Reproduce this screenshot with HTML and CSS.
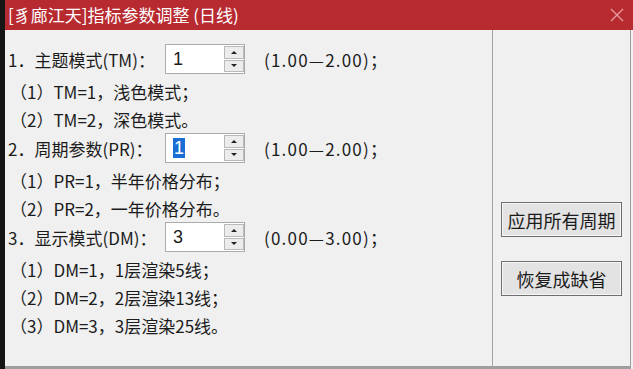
FILE: index.html
```html
<!DOCTYPE html>
<html lang="zh-CN">

<head>
    <meta charset="UTF-8">
    <title>指标参数调整</title>
    <link rel="stylesheet" href="styles.css">
</head>

<body>
    <div class="edge"></div>
    <div class="window">
        <!-- 标题栏 -->
        <div class="titlebar">
            <span class="title">[豸廊江天]指标参数调整 (日线)</span>
            <svg class="close" width="14" height="14" viewBox="0 0 14 14">
                <path d="M1 1L13 13M13 1L1 13" stroke="#e59fa2" stroke-width="1.3" fill="none"/>
            </svg>
        </div>
        <!-- 内容 -->
        <div class="content">
            <div class="params">
                <div class="row-head">
                    <span class="label">1．主题模式(TM)：</span>
                    <div class="spin">
                        <div class="spin-value">1</div>
                        <div class="spin-btns"><span class="up"></span><span class="down"></span></div>
                    </div>
                    <span class="range">(1.00—2.00)；</span>
                </div>
                <div class="row-sub">（1）TM=1，浅色模式；</div>
                <div class="row-sub">（2）TM=2，深色模式。</div>

                <div class="row-head">
                    <span class="label">2．周期参数(PR)：</span>
                    <div class="spin">
                        <div class="spin-value"><span class="selected">1</span></div>
                        <div class="spin-btns"><span class="up"></span><span class="down"></span></div>
                    </div>
                    <span class="range">(1.00—2.00)；</span>
                </div>
                <div class="row-sub">（1）PR=1，半年价格分布；</div>
                <div class="row-sub">（2）PR=2，一年价格分布。</div>

                <div class="row-head">
                    <span class="label">3．显示模式(DM)：</span>
                    <div class="spin">
                        <div class="spin-value">3</div>
                        <div class="spin-btns"><span class="up"></span><span class="down"></span></div>
                    </div>
                    <span class="range">(0.00—3.00)；</span>
                </div>
                <div class="row-sub">（1）DM=1，1层渲染5线；</div>
                <div class="row-sub">（2）DM=2，2层渲染13线；</div>
                <div class="row-sub">（3）DM=3，3层渲染25线。</div>
            </div>
            <div class="actions">
                <button>应用所有周期</button>
                <button>恢复成缺省</button>
            </div>
            <div class="outside"></div>
        </div>
    </div>
</body>

</html>
```

FILE: styles.css
```css
* {
    margin: 0;
    padding: 0;
    box-sizing: border-box;
}

body {
    width: 633px;
    height: 369px;
    display: flex;
    overflow: hidden;
    background-color: #e9eef3;
    font-family: "Noto Sans CJK SC", sans-serif;
    color: #1b1b1b;
}

.edge {
    width: 5px;
    background-color: #151515;
}

.window {
    width: 628px;
    display: flex;
    flex-direction: column;
}

/*标题栏*/
.titlebar {
    height: 30px;
    display: flex;
    align-items: center;
    justify-content: space-between;
    padding: 0 9px 0 3px;
    background-color: #b72a30;
    color: #fff;
    font-size: 17px;
}

.title {
    line-height: 30px;
}

/*内容*/
.content {
    flex: 1;
    display: flex;
}

.params {
    width: 487px;
    padding: 14px 0 0 3px;
    background-color: #f0f0f0;
    border-bottom: 3px solid #9e9e9e;
    font-size: 17px;
}

.row-head {
    height: 30px;
    margin-bottom: 3px;
    display: flex;
    align-items: center;
}

.label {
    width: 157px;
}

.spin {
    width: 80px;
    height: 30px;
    display: flex;
    background-color: #fff;
    border: 1px solid #ababab;
}

.spin-value {
    flex: 1;
    padding-left: 7px;
    font-family: "Liberation Sans", sans-serif;
    font-size: 18px;
    line-height: 28px;
}

.selected {
    display: inline-block;
    line-height: 20px;
    padding: 0 1px;
    background-color: #1b6fd4;
    color: #fff;
}

.spin-btns {
    width: 20px;
    display: flex;
    flex-direction: column;
    gap: 1px;
    padding: 1px 0;
}

.spin-btns span {
    flex: 1;
    display: flex;
    align-items: center;
    justify-content: center;
    background-color: #ececec;
    border: 1px solid #b9b9b9;
}

.spin-btns .up::after {
    content: "";
    border: 3px solid transparent;
    border-bottom: 3px solid #222;
    border-top: none;
}

.spin-btns .down::after {
    content: "";
    border: 3px solid transparent;
    border-top: 3px solid #222;
    border-bottom: none;
}

.range {
    margin-left: 19px;
    letter-spacing: 1.2px;
}

.row-sub {
    height: 28px;
    display: flex;
    align-items: center;
    padding-left: 2px;
}

/*按钮区*/
.actions {
    width: 139px;
    display: flex;
    flex-direction: column;
    gap: 24px;
    padding: 172px 0 0 8px;
    background-color: #f0f0f0;
    border-left: 1px solid #a3a3a3;
    border-right: 1px solid #9c9c9c;
    border-bottom: 3px solid #9e9e9e;
}

.actions button {
    width: 121px;
    height: 35px;
    background-color: #e3e3e3;
    border: 1px solid #6e6e6e;
    box-shadow: inset 0 0 0 1px #f6f6f6;
    font-family: "Noto Sans CJK SC", sans-serif;
    font-size: 18px;
    color: #1b1b1b;
}

.outside {
    width: 2px;
    background-color: #eef2f6;
}
```
